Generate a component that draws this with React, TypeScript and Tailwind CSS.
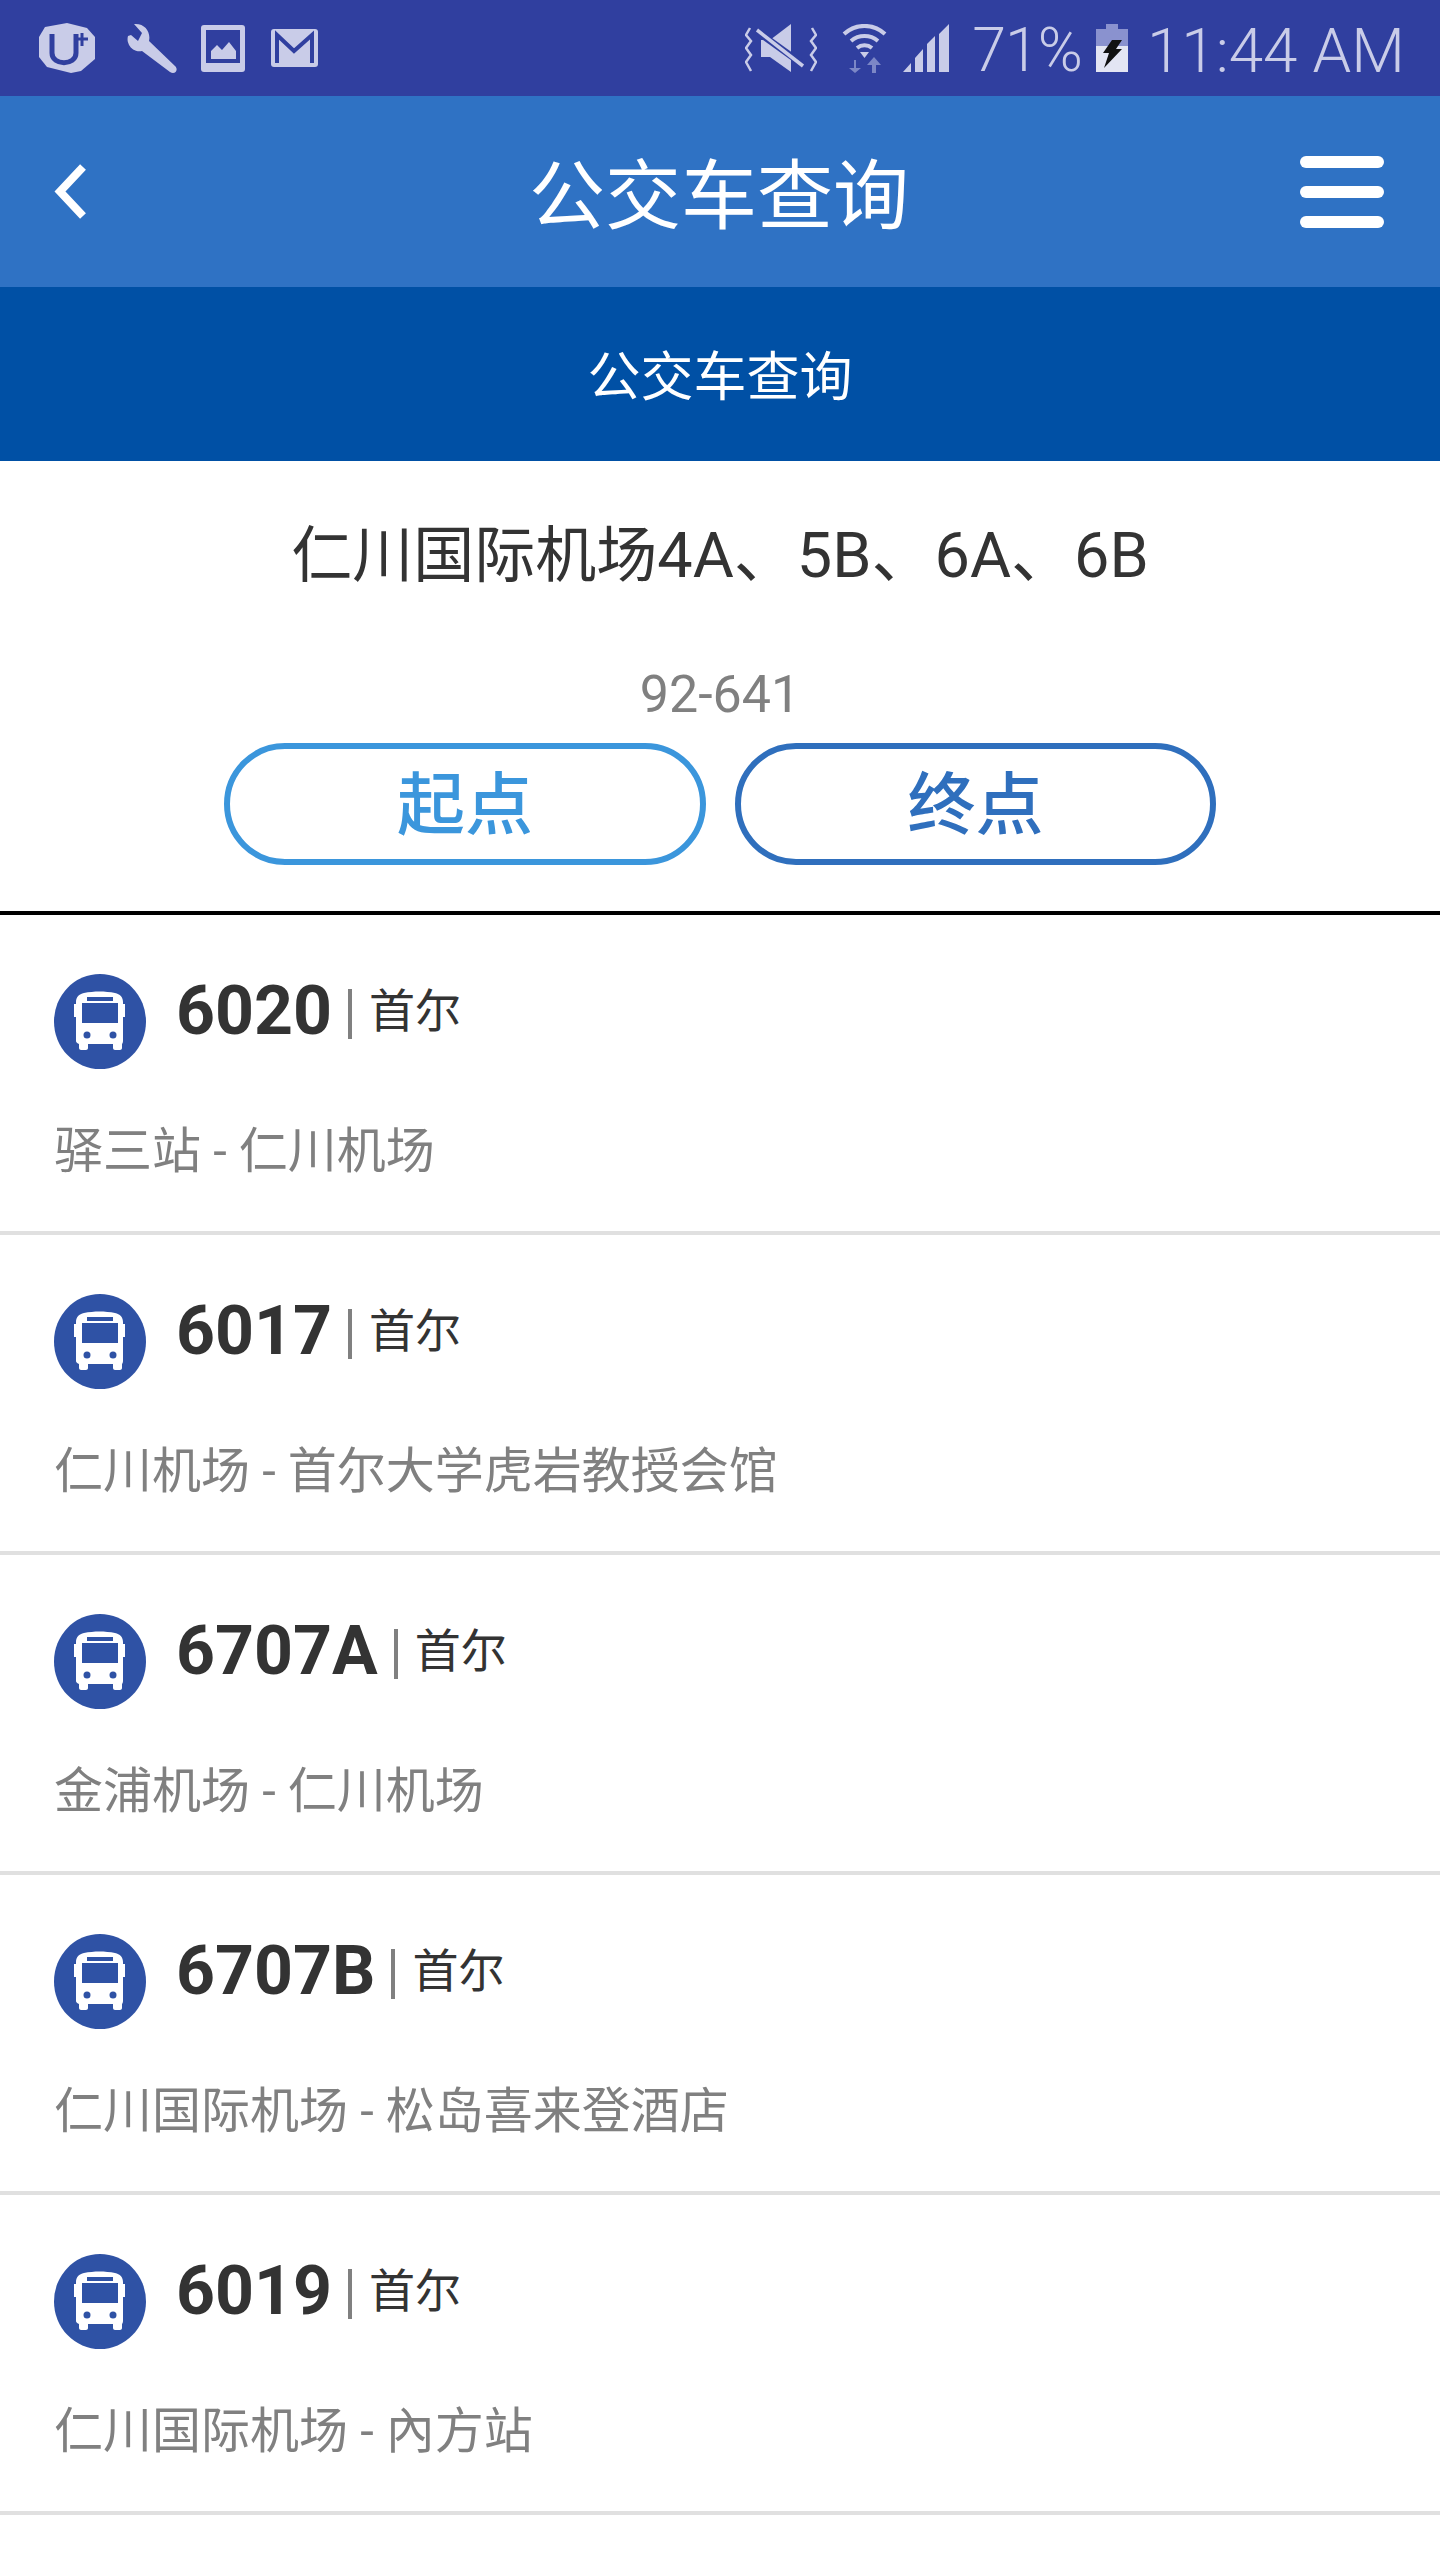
import React from 'react';

const routes = [
  { no: '6020', desc: '驿三站 - 仁川机场' },
  { no: '6017', desc: '仁川机场 - 首尔大学虎岩教授会馆' },
  { no: '6707A', desc: '金浦机场 - 仁川机场' },
  { no: '6707B', desc: '仁川国际机场 - 松岛喜来登酒店' },
  { no: '6019', desc: '仁川国际机场 - 內方站' },
];

const font = "font-['Roboto','Noto_Sans_CJK_SC',sans-serif]";

function BusIcon() {
  return (
    <svg viewBox="0 0 92 95" className="mt-[1px] w-[92px] h-[95px] shrink-0">
      <ellipse cx="46" cy="47.500" rx="46" ry="47.500" fill="#2f52a5" />
      <path
        d="M22 28c0-5 3-8 8-9 10-2 21-2 31 0 5 1 8 4 8 9v2h2v13h-2v24c0 2-1 3-1 3v4c0 1-1 2-2 2h-5c-1 0-2-1-2-2v-4H34v4c0 1-1 2-2 2h-5c-1 0-2-1-2-2v-4s-3-1-3-3V43h-2V30h2z"
        fill="#fff"
      />
      <rect x="33" y="23" width="26" height="4" fill="#2f52a5" />
      <rect x="28" y="29" width="36" height="20" fill="#2f52a5" />
      <circle cx="33" cy="61" r="3.500" fill="#2f52a5" />
      <circle cx="59" cy="61" r="3.500" fill="#2f52a5" />
    </svg>
  );
}

function RouteRow({ no, desc }: { no: string; desc: string }) {
  return (
    <div className="h-[320px] border-b-4 border-[#e0e0e0] pl-[54px] pt-[58px]">
      <div className="flex items-start">
        <BusIcon />
        <div className="ml-[30px] flex items-center h-[76px]">
          <span className="text-[68px] leading-none font-bold text-[#333333]">{no}</span>
          <span className="ml-[16px] w-[4px] h-[50px] mt-[6px] bg-[#808080]" />
          <span className="ml-[17px] text-[46px] leading-none text-[#333333]">首尔</span>
        </div>
      </div>
      <div className="mt-[47px] text-[49px] leading-[72px] text-[#808080]">{desc}</div>
    </div>
  );
}

function StatusBar() {
  const c = '#c9cce8';
  return (
    <div className="h-[96px] bg-[#303f9f] flex items-center justify-between pl-[39px] pr-[35px]">
      <div className="flex items-center">
        <svg viewBox="0 0 56 50" className="w-[56px] h-[50px]">
          <path d="M28 0l20 5 8 9v22l-14 12-10 2-24-6-8-10V14l6-10z" fill={c} />
          <path d="M13 11v19c0 13 24 13 24 0V11" fill="none" stroke="#303f9f" strokeWidth="5" />
          <path d="M43 10v13M37 16h12" stroke="#303f9f" strokeWidth="3" />
        </svg>
        <svg viewBox="0 0 52 51" className="ml-[30px] w-[52px] h-[51px]">
          <path d="M3 12a12 12 0 0 0 14 15l28 21c5 3 9-2 5-6L24 17C26 8 20-1 9 0l8 9-4 8-7-6z" fill={c} transform="translate(0 1)" />
        </svg>
        <svg viewBox="0 0 44 47" className="ml-[24px] w-[44px] h-[47px]">
          <rect x="0" y="0" width="44" height="47" rx="3" fill={c} />
          <rect x="5" y="5" width="34" height="33" fill="#303f9f" />
          <path d="M10 34v-8l6-6 5 5 7-8 7 9v8z" fill={c} />
        </svg>
        <svg viewBox="0 0 47 38" className="ml-[26px] w-[47px] h-[38px]">
          <rect width="47" height="38" rx="3" fill={c} />
          <path d="M6 34V6l17 16L41 6v28" fill="none" stroke="#303f9f" strokeWidth="4" />
        </svg>
      </div>
      <div className="flex items-center">
        <svg viewBox="0 0 72 48" className="w-[72px] h-[48px]">
          <path d="M5 4l-4 7 5 6-5 7 5 7-5 7 5 9M67 4l4 7-5 6 5 7-5 7 5 7-5 9" fill="none" stroke={c} strokeWidth="2.500" />
          <path d="M16 16h9L46 0v48L25 33h-9z" fill={c} />
          <path d="M10 6l50 36" stroke="#303f9f" strokeWidth="7" />
          <path d="M12 6l46 36" stroke={c} strokeWidth="3.500" />
        </svg>
        <svg viewBox="0 0 45 49" className="ml-[25px] w-[45px] h-[49px]">
          <path d="M2 10a30 30 0 0 1 41 0M9 17a21 21 0 0 1 27 0M15 24a12 12 0 0 1 15 0" fill="none" stroke={c} strokeWidth="4" />
          <path d="M18 28h9l-4.500 6z" fill={c} />
          <path d="M12 36v8h-5l6 5 6-5h-5v-8zM30 49v-8h-5l7-8 7 8h-5v8z" fill="#7c87c6" />
        </svg>
        <svg viewBox="0 0 48 48" className="ml-[16px] w-[48px] h-[48px]">
          <path d="M0 48l8-9v9zM12 48V34l8-9v23zM24 48V20l8-8v36zM36 48V10l10-10v48z" fill={c} />
        </svg>
        <span className="ml-[21px] mt-[5px] text-[61px] leading-none font-light tracking-[-1px] text-[#c9cce8]">71%</span>
        <svg viewBox="0 0 32 48" className="ml-[14px] w-[32px] h-[48px]">
          <path d="M10 0h12v5h10v43H0V5h10z" fill="#8a92cf" />
          <rect y="22" width="32" height="26" fill="#e3e5f3" />
          <path d="M16 16h10l-6 9h6L8 44l5-15H7z" fill="#111" />
        </svg>
        <span className="ml-[19px] mt-[5px] text-[62px] leading-none font-light text-[#c9cce8]">11:44 AM</span>
      </div>
    </div>
  );
}

export default function App() {
  return (
    <div className={`w-[1440px] min-h-[2560px] bg-white ${font}`}>
      <StatusBar />

      <div className="h-[191px] bg-[#2f72c4] flex items-center pl-[54px] pr-[56px]">
        <div className="w-[84px]">
          <svg viewBox="0 0 33 55" className="w-[33px] h-[55px]">
            <path d="M29 3L6 27.500 29 52" fill="none" stroke="#fff" strokeWidth="8" />
          </svg>
        </div>
        <div className="flex-1 pt-[10px] text-center text-[76px] leading-none text-white">公交车查询</div>
        <div className="w-[84px] flex flex-col gap-[18px]">
          <div className="h-[12px] rounded-full bg-white" />
          <div className="h-[12px] rounded-full bg-white" />
          <div className="h-[12px] rounded-full bg-white" />
        </div>
      </div>

      <div className="h-[174px] bg-[#0050a5] flex items-center justify-center pt-[8px]">
        <span className="text-[53px] leading-none text-white">公交车查询</span>
      </div>

      {/* station */}
      <div className="h-[454px] border-b-4 border-black flex flex-col items-center">
        <div className="mt-[55px] text-[61px] leading-[80px] text-[#333333]">
          仁川国际机场<span className="text-[63px]">4A、5B、6A、6B</span>
        </div>
        <div className="mt-[69px] text-[52px] leading-[60px] text-[#808080]">92-641</div>
        <div className="mt-[18px] flex gap-[29px]">
          <button className="w-[482px] h-[122px] rounded-full border-[6px] border-[#3b96dc] pt-[4px] text-[68px] leading-none font-medium text-[#3b96dc]">
            起点
          </button>
          <button className="w-[481px] h-[122px] rounded-full border-[6px] border-[#2f6fbd] pt-[4px] text-[68px] leading-none font-medium text-[#2f6fbd]">
            终点
          </button>
        </div>
      </div>

      {routes.map((r) => (
        <RouteRow key={r.no} no={r.no} desc={r.desc} />
      ))}
    </div>
  );
}
